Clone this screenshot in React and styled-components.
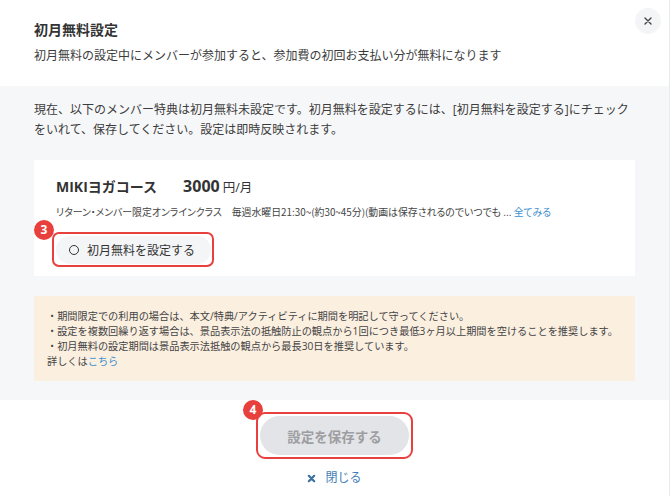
import React from 'react'
import styled, { createGlobalStyle } from 'styled-components'

const GlobalStyle = createGlobalStyle`
  html, body {
    margin: 0;
    padding: 0;
    background: #fff;
  }
  body {
    font-family: "Open Sans", "Noto Sans CJK JP", sans-serif;
    color: #333;
  }
`

function Badge ({ n }) {
  return <$badge>{n}</$badge>
}

export default function App () {
  return (
    <$modal>
      <GlobalStyle />
      <$header>
        <$title>初月無料設定</$title>
        <$subtitle>初月無料の設定中にメンバーが参加すると、参加費の初回お支払い分が無料になります</$subtitle>
        <$closeTop aria-label="close">
          <svg width="10" height="10" viewBox="0 0 10 10">
            <path d="M2 2 L8 8 M8 2 L2 8" stroke="#444" strokeWidth="1.4" strokeLinecap="round" />
          </svg>
        </$closeTop>
      </$header>

      <$body>
        <$lead>
          現在、以下のメンバー特典は初月無料未設定です。初月無料を設定するには、[初月無料を設定する]にチェックをいれて、保存してください。設定は即時反映されます。
        </$lead>

        <$card>
          <$planRow>
            <$planName>MIKIヨガコース</$planName>
            <$price>3000<span>円/月</span></$price>
          </$planRow>
          <$desc>
            リターン・メンバー限定オンラインクラス　毎週水曜日21:30~(約30~45分)(動画は保存されるのでいつでも ... <$link>全てみる</$link>
          </$desc>
          <$highlight $radius="7px" $badgeLeft="-20px" $badgeTop="-14px">
            <Badge n="3" />
            <$chip>
              <$radio />
              初月無料を設定する
            </$chip>
          </$highlight>
        </$card>

        <$note>
          <div>・期間限定での利用の場合は、本文/特典/アクティビティに期間を明記して守ってください。</div>
          <div>・設定を複数回繰り返す場合は、景品表示法の抵触防止の観点から1回につき最低3ヶ月以上期間を空けることを推奨します。</div>
          <div>・初月無料の設定期間は景品表示法抵触の観点から最長30日を推奨しています。</div>
          <div>詳しくは<$link>こちら</$link></div>
        </$note>
      </$body>

      <$footer>
        <$saveWrap $radius="9px" $badgeLeft="-15px" $badgeTop="-14px">
          <Badge n="4" />
          <$saveButton disabled>設定を保存する</$saveButton>
        </$saveWrap>
        <$closeLink>
          <svg width="9" height="9" viewBox="0 0 10 10">
            <path d="M2 2 L8 8 M8 2 L2 8" stroke="#3a6f9f" strokeWidth="2.4" strokeLinecap="round" />
          </svg>
          閉じる
        </$closeLink>
      </$footer>
    </$modal>
  )
}

const $modal = styled.div`
  position: relative;
  width: 669px;
  height: 496px;
  border-right: 1px solid #e9eaec;
  background: #fff;
  overflow: hidden;
`

const $header = styled.div`
  position: relative;
  padding: 20px 34px 20px;
`

const $title = styled.div`
  font-size: 14px;
  font-weight: 700;
  line-height: 20px;
  color: #333;
`

const $subtitle = styled.div`
  margin-top: 6px;
  font-size: 12px;
  line-height: 20px;
  color: #3c3c3c;
`

const $closeTop = styled.button`
  position: absolute;
  top: 8px;
  right: 8px;
  width: 26px;
  height: 26px;
  border: none;
  border-radius: 50%;
  background: #f4f5f7;
  display: flex;
  align-items: center;
  justify-content: center;
  padding: 0;
  cursor: pointer;
`

const $body = styled.div`
  background: #f6f7f9;
  padding: 14px 34px 19px;
`

const $lead = styled.p`
  margin: 0;
  font-size: 12px;
  line-height: 20px;
  color: #3c3c3c;
`

const $card = styled.div`
  margin-top: 20px;
  background: #fff;
  padding: 15px 22px 9px;
`

const $planRow = styled.div`
  display: flex;
  align-items: baseline;
  gap: 26px;
  line-height: 22px;
`

const $planName = styled.div`
  font-size: 14px;
  font-weight: 700;
  color: #333;
`

const $price = styled.div`
  font-size: 16px;
  font-weight: 700;
  color: #333;
  span {
    margin-left: 3px;
    font-size: 12.5px;
    font-weight: 400;
  }
`

const $desc = styled.div`
  margin-top: 5px;
  font-family: "Noto Sans CJK JP", sans-serif;
  font-feature-settings: "palt";
  font-size: 9.9px;
  line-height: 16px;
  color: #444;
  white-space: nowrap;
`

const $link = styled.a`
  color: #3b8fd0;
  text-decoration: none;
  cursor: pointer;
`

const $highlight = styled.div`
  position: relative;
  display: inline-block;
  margin-top: 12px;
  margin-left: -4px;
  padding: 2px 1px 1px 2px;
  border: 2px solid #e8403d;
  border-radius: ${p => p.$radius};
  > span {
    left: ${p => p.$badgeLeft};
    top: ${p => p.$badgeTop};
  }
`

const $saveWrap = styled($highlight)`
  margin: 0;
  padding: 2px;
`

const $badge = styled.span`
  position: absolute;
  width: 20px;
  height: 20px;
  border-radius: 50%;
  background: #e8403d;
  color: #fff;
  font-size: 12px;
  font-weight: 700;
  line-height: 20px;
  text-align: center;
`

const $chip = styled.div`
  display: flex;
  align-items: center;
  gap: 8px;
  height: 28px;
  padding: 0 16px 0 13px;
  border-radius: 14px;
  background: #f4f5f7;
  font-size: 12px;
  color: #333;
`

const $radio = styled.span`
  width: 8px;
  height: 8px;
  border: 1.6px solid #333;
  border-radius: 50%;
`

const $note = styled.div`
  margin-top: 20px;
  background: #fbefe0;
  padding: 13px 13px 12px;
  font-size: 10.2px;
  line-height: 15px;
  color: #444;
  white-space: nowrap;
`

const $footer = styled.div`
  display: flex;
  flex-direction: column;
  align-items: center;
  padding-top: 12px;
`

const $saveButton = styled.button`
  display: block;
  width: 149px;
  height: 39px;
  border: none;
  border-radius: 20px;
  background: #e3e4e7;
  color: #9d9ea2;
  font-family: inherit;
  font-size: 13.5px;
  font-weight: 700;
  cursor: default;
`

const $closeLink = styled.a`
  display: flex;
  align-items: center;
  gap: 9px;
  margin-top: 11px;
  font-size: 12px;
  line-height: 16px;
  color: #3f7fb5;
  cursor: pointer;
`
